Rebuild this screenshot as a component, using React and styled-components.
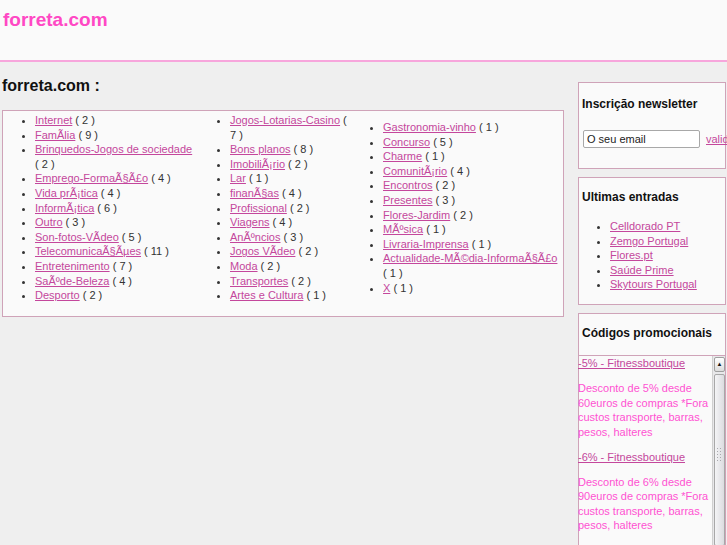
import styled, { createGlobalStyle } from "styled-components";

const GlobalStyle = createGlobalStyle`
  html, body {
    margin: 0;
    padding: 0;
    overflow: hidden;
    background: #efefef;
  }
  body {
    font-family: "Liberation Sans", Arial, sans-serif;
    font-size: 11px;
    color: #333;
  }
  a {
    color: #c4479c;
  }
`;

const Page = styled.div`
  width: 727px;
  height: 545px;
  overflow: hidden;
`;

const Header = styled.header`
  height: 60px;
  background: #fafafa;
  border-bottom: 2px solid #f7a6dc;
  box-sizing: content-box;
`;

const Logo = styled.h1`
  margin: 0;
  padding: 9px 0 0 3px;
  font-size: 19px;
  line-height: 22px;
  font-weight: bold;
  color: #ff48c4;
`;

const Columns = styled.div`
  display: flex;
  align-items: flex-start;
`;

const Main = styled.main`
  width: 562px;
  margin-left: 2px;
`;

const PageTitle = styled.h2`
  margin: 15px 0 15px;
  font-size: 16px;
  line-height: 18px;
  color: #111;
`;

const Directory = styled.div`
  display: grid;
  grid-template-columns: 195px 153px 1fr;
  align-items: start;
  background: #fafafa;
  border: 1px solid #cfa3b8;
  padding: 2px 0 13px;
`;

const Category = styled.ul`
  margin: ${(p) => p.$offset || 0}px 0 0;
  padding-left: 32px;
  line-height: 14.6px;
  color: #333;
`;

const Sidebar = styled.aside`
  width: 148px;
  margin: 20px 0 0 14px;
  display: flex;
  flex-direction: column;
  gap: 8px;
`;

const Panel = styled.section`
  background: #fafafa;
  border: 1px solid #cfa3b8;
  padding: ${(p) => p.$padding};
`;

const PanelTitle = styled.h3`
  margin: 0;
  padding-left: 3px;
  font-size: 12px;
  line-height: 15px;
  color: #111;
`;

const NewsletterRow = styled.div`
  display: flex;
  align-items: center;
  gap: 6px;
  margin: 18px 0 0 4px;
  white-space: nowrap;
`;

const EmailInput = styled.input`
  width: 117px;
  height: 18px;
  box-sizing: border-box;
  border: 1px solid #a8a8a8;
  border-radius: 2px;
  background: #fff;
  padding: 0 3px;
  font-family: "Liberation Sans", Arial, sans-serif;
  font-size: 11px;
  color: #222;
  flex-shrink: 0;
`;

const LatestList = styled.ul`
  margin: 14px 0 0;
  padding-left: 31px;
  line-height: 14.6px;
`;

const PromoFrame = styled.div`
  display: flex;
  height: 190px;
  margin-top: 14px;
  margin-left: -1px;
  border-top: 1px solid #cfa3b8;
  overflow: hidden;
`;

const PromoList = styled.div`
  flex: 1;
  padding-right: 2px;
  line-height: 14.6px;
`;

const PromoLink = styled.p`
  margin: 0 0 10.4px;
`;

const PromoText = styled.p`
  margin: 0 0 10.4px;
  color: #ff52d2;
`;

const Scrollbar = styled.div`
  width: 13px;
  display: flex;
  flex-direction: column;
  background: #e8e8ea;
  border-left: 1px solid #d0d0d0;
  padding: 1px 0 0 1px;
  box-sizing: border-box;
`;

const ScrollButton = styled.div`
  height: 13px;
  border: 1px solid #a0a0a0;
  border-radius: 2px;
  background: linear-gradient(#ffffff, #dcdcdc);
  display: flex;
  align-items: center;
  justify-content: center;
  font-size: 6px;
  color: #111;
`;

const ScrollThumb = styled.div`
  flex: 1;
  margin-top: 2px;
  border: 1px solid #a8a8a8;
  border-radius: 2px;
  background: linear-gradient(90deg, #f4f4f6, #dcdce0);
  display: flex;
  justify-content: center;
  padding-top: 72px;
`;

const Grip = styled.div`
  width: 7px;
  height: 16px;
  background-image: radial-gradient(circle, #a9a9ad 0.8px, transparent 1px);
  background-size: 3px 3px;
`;

const col1 = [
  ["Internet", 2],
  ["FamÃlia", 9],
  ["Brinquedos-Jogos de sociedade", 2],
  ["Emprego-FormaÃ§Ã£o", 4],
  ["Vida prÃ¡tica", 4],
  ["InformÃ¡tica", 6],
  ["Outro", 3],
  ["Son-fotos-VÃdeo", 5],
  ["TelecomunicaÃ§Ãµes", 11],
  ["Entretenimento", 7],
  ["SaÃºde-Beleza", 4],
  ["Desporto", 2],
];

const col2 = [
  ["Jogos-Lotarias-Casino", 7],
  ["Bons planos", 8],
  ["ImobiliÃ¡rio", 2],
  ["Lar", 1],
  ["finanÃ§as", 4],
  ["Profissional", 2],
  ["Viagens", 4],
  ["AnÃºncios", 3],
  ["Jogos VÃdeo", 2],
  ["Moda", 2],
  ["Transportes", 2],
  ["Artes e Cultura", 1],
];

const col3 = [
  ["Gastronomia-vinho", 1],
  ["Concurso", 5],
  ["Charme", 1],
  ["ComunitÃ¡rio", 4],
  ["Encontros", 2],
  ["Presentes", 3],
  ["Flores-Jardim", 2],
  ["MÃºsica", 1],
  ["Livraria-Imprensa", 1],
  ["Actualidade-MÃ©dia-InformaÃ§Ã£o", 1],
  ["X", 1],
];

const latest = ["Celldorado PT", "Zemgo Portugal", "Flores.pt", "Saúde Prime", "Skytours Portugal"];

const promos = [
  {
    title: "-5% - Fitnessboutique",
    text: "Desconto de 5% desde 60euros de compras *Fora custos transporte, barras, pesos, halteres",
  },
  {
    title: "-6% - Fitnessboutique",
    text: "Desconto de 6% desde 90euros de compras *Fora custos transporte, barras, pesos, halteres",
  },
];

const CategoryList = ({ items, offset }) => (
  <Category $offset={offset}>
    {items.map(([name, count]) => (
      <li key={name}>
        <a href="#">{name}</a> ( {count} )
      </li>
    ))}
  </Category>
);

export default function App() {
  return (
    <Page>
      <GlobalStyle />
      <Header>
        <Logo>forreta.com</Logo>
      </Header>
      <Columns>
        <Main>
          <PageTitle>forreta.com :</PageTitle>
          <Directory>
            <CategoryList items={col1} />
            <CategoryList items={col2} />
            <CategoryList items={col3} offset={7} />
          </Directory>
        </Main>
        <Sidebar>
          <Panel $padding="14px 0 20px">
            <PanelTitle>Inscrição newsletter</PanelTitle>
            <NewsletterRow>
              <EmailInput defaultValue="O seu email" />
              <a href="#">valider</a>
            </NewsletterRow>
          </Panel>
          <Panel $padding="12px 0 12px">
            <PanelTitle>Ultimas entradas</PanelTitle>
            <LatestList>
              {latest.map((name) => (
                <li key={name}>
                  <a href="#">{name}</a>
                </li>
              ))}
            </LatestList>
          </Panel>
          <Panel $padding="12px 0 0">
            <PanelTitle>Códigos promocionais</PanelTitle>
            <PromoFrame>
              <PromoList>
                {promos.map((promo) => (
                  <div key={promo.title}>
                    <PromoLink>
                      <a href="#">{promo.title}</a>
                    </PromoLink>
                    <PromoText>{promo.text}</PromoText>
                  </div>
                ))}
              </PromoList>
              <Scrollbar>
                <ScrollButton>▲</ScrollButton>
                <ScrollThumb>
                  <Grip />
                </ScrollThumb>
              </Scrollbar>
            </PromoFrame>
          </Panel>
        </Sidebar>
      </Columns>
    </Page>
  );
}
